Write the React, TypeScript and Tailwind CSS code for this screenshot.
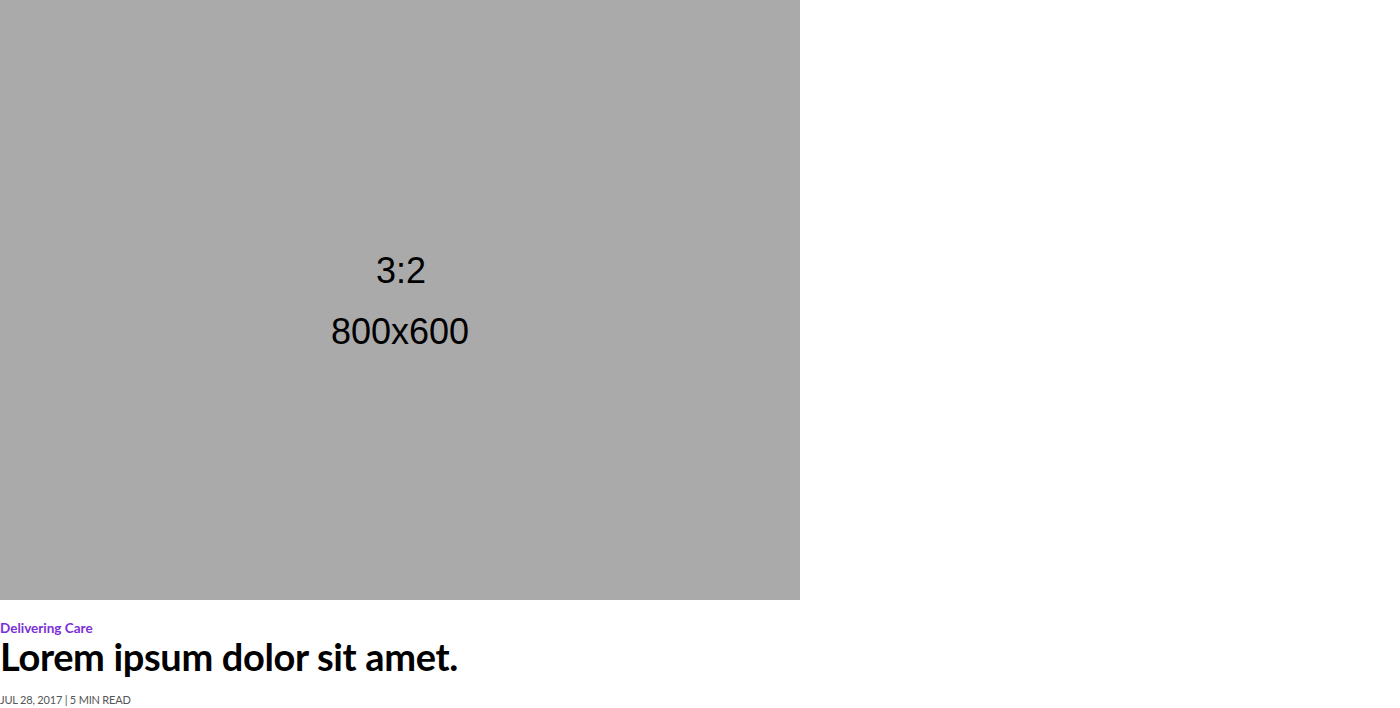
export default function App() {
  return (
    <div className="min-h-screen bg-white" style={{ fontFamily: 'Lato, "Open Sans", sans-serif' }}>
      <div className="w-[800px]">
        <div className="flex h-[600px] w-[800px] flex-col items-center justify-center bg-[#aaaaaa] text-black [font-family:'Liberation_Sans',Arial,sans-serif]">
          <div className="pl-[2px] pt-[1px] text-[36px] leading-[61px]">3:2</div>
          <div className="text-[36px] leading-[61px]">800x600</div>
        </div>
        <div className="pt-[20px]">
          <div className="text-[13.5px] font-bold leading-[16px] text-[#7b2fd6]">Delivering Care</div>
          <h2 className="text-[38px] font-bold leading-[40px] tracking-[-0.35px] text-black">Lorem ipsum dolor sit amet.</h2>
          <div className="mt-[16px] text-[11px] leading-[16px] tracking-[-0.2px] text-[#555555]">JUL 28, 2017 | 5 MIN READ</div>
        </div>
      </div>
    </div>
  )
}
